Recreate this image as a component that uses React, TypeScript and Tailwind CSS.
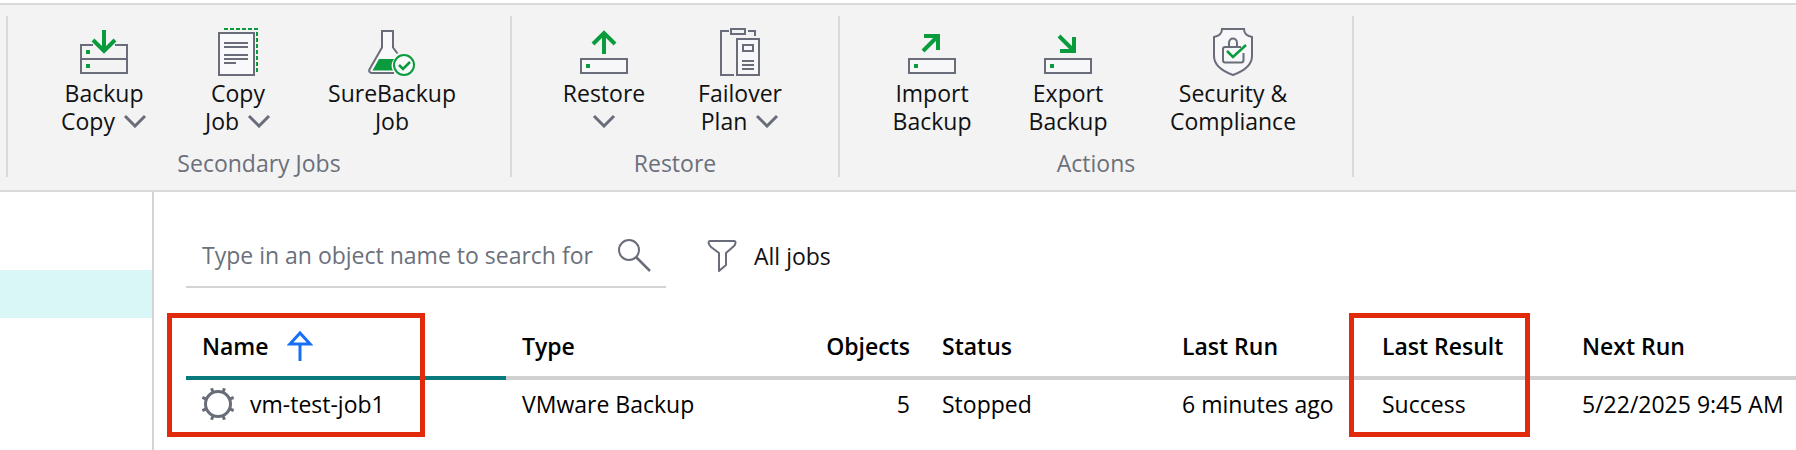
import type { ReactNode } from "react";

const GREEN = "#0a9b3c";

function Icon({ children }: { children: ReactNode }) {
  return (
    <svg width="48" height="48" viewBox="0 0 48 48" fill="none" stroke="#686d79" strokeWidth="2" aria-hidden="true">
      {children}
    </svg>
  );
}

// Single storage unit, shared by restore / import / export
function Drive() {
  return (
    <>
      <rect x="1" y="31" width="46" height="14" fill="#f7f7f9" />
      <rect x="6" y="36" width="4" height="4" fill={GREEN} stroke="none" />
    </>
  );
}

function BackupCopyIcon() {
  return (
    <Icon>
      <path d="M13 17H1v28h46V17H35M1 31h46" />
      <path d="M6 22h4v4H6zM6 36h4v4H6z" fill={GREEN} stroke="none" />
      <path d="M24 2v20M13 12l11 11 11-11" stroke={GREEN} strokeWidth="4" />
    </Icon>
  );
}

function CopyJobIcon() {
  return (
    <Icon>
      <rect x="5" y="5" width="35" height="42" fill="#f9f9fb" />
      <path d="M10 15h24M10 19h24M10 27h24M10 31h24M10 35h12" />
      <path d="M10 1h34M43 4v40" stroke={GREEN} strokeDasharray="4 2" />
    </Icon>
  );
}

function SureBackupIcon() {
  return (
    <Icon>
      <path d="M26 45H4c-2.500 0-3.500-2-2.300-4L14 19.500V3h11v16.500l4.500 6" fill="#f9f9fb" />
      <path d="M11 31h15c-3 4-3 8-1 11.500H4.500z" fill={GREEN} stroke="none" />
      <circle cx="36" cy="37" r="10" stroke={GREEN} fill="#f9f9fb" />
      <path d="M31 37l4 4 7-7" stroke={GREEN} strokeWidth="2.500" />
    </Icon>
  );
}

function RestoreIcon() {
  return (
    <Icon>
      <Drive />
      <path d="M24 26V6M13 16L24 5l11 11" stroke={GREEN} strokeWidth="4" />
    </Icon>
  );
}

function FailoverIcon() {
  return (
    <Icon>
      <path d="M13 3H5v44h13M32 3h7v5" />
      <rect x="15" y="1" width="14" height="5" />
      <rect x="21" y="11" width="22" height="36" fill="#f7f7f9" />
      <rect x="27" y="17" width="10" height="6" />
      <path d="M26 33h12M26 37h12M26 41h12" />
    </Icon>
  );
}

function ImportIcon() {
  return (
    <Icon>
      <Drive />
      <path d="M15 23L29 9M16 8h14v14" stroke={GREEN} strokeWidth="4" />
    </Icon>
  );
}

function ExportIcon() {
  return (
    <Icon>
      <Drive />
      <path d="M15 8l14 14M16 23h14V9" stroke={GREEN} strokeWidth="4" />
    </Icon>
  );
}

function SecurityIcon() {
  return (
    <Icon>
      <path d="M13 1h22c0 4 3 7 8 8v19c0 9-8 15-19 19C13 43 5 37 5 28V9c5-1 8-4 8-8z" fill="#f7f7f9" />
      <path d="M20 19v-4c0-6 8-6 8 0v4M32 19H16c-1.500 0-2 .5-2 2v11c0 1.500.5 2.500 2 2.500h16c1.500 0 2.500-1 2.500-2.500v-7" />
      <path d="M18 23l6 6 13-12" stroke={GREEN} strokeWidth="2.500" />
    </Icon>
  );
}

function Chevron() {
  return (
    <svg width="24" height="14" viewBox="0 0 24 14" fill="none" stroke="#686d79" strokeWidth="3" aria-hidden="true">
      <path d="M2 2l10 10L22 2" />
    </svg>
  );
}

interface ActionProps {
  icon: ReactNode;
  top: string;
  bottom?: string;
  menu?: boolean;
  className: string;
}

function RibbonAction({ icon, top, bottom, menu, className }: ActionProps) {
  return (
    <button type="button" className={`flex flex-col items-center gap-[3px] ${className}`}>
      {icon}
      <span className="flex flex-col items-center leading-7 whitespace-nowrap">
        <span>{top}</span>
        <span className="flex h-7 items-center gap-2">
          {bottom}
          {menu && <Chevron />}
        </span>
      </span>
    </button>
  );
}

function RibbonGroup({ label, className, children }: { label: string; className: string; children: ReactNode }) {
  return (
    <section aria-label={label} className={`flex flex-col border-r-2 border-[#d9d9d9] pt-3 ${className}`}>
      <div className="flex pl-6">{children}</div>
      <div className="mt-3.5 text-center leading-7 text-[#6b707b]">{label}</div>
    </section>
  );
}

function Ribbon() {
  return (
    <header className="flex border-y-2 border-[#d9d9d9] bg-[#f3f3f3] pt-[11px] pb-[13px]">
      <div className="w-2 border-r-2 border-[#d9d9d9]" />
      <RibbonGroup label="Secondary Jobs" className="w-[504px]">
        <RibbonAction icon={<BackupCopyIcon />} top="Backup" bottom="Copy" menu className="w-36" />
        <RibbonAction icon={<CopyJobIcon />} top="Copy" bottom="Job" menu className="w-[124px]" />
        <RibbonAction icon={<SureBackupIcon />} top="SureBackup" bottom="Job" className="w-[184px]" />
      </RibbonGroup>
      <RibbonGroup label="Restore" className="w-[328px]">
        <RibbonAction icon={<RestoreIcon />} top="Restore" menu className="w-[136px]" />
        <RibbonAction icon={<FailoverIcon />} top="Failover" bottom="Plan" menu className="w-[136px]" />
      </RibbonGroup>
      <RibbonGroup label="Actions" className="w-[514px]">
        <RibbonAction icon={<ImportIcon />} top="Import" bottom="Backup" className="w-[136px]" />
        <RibbonAction icon={<ExportIcon />} top="Export" bottom="Backup" className="w-[136px]" />
        <RibbonAction icon={<SecurityIcon />} top="Security &" bottom="Compliance" className="w-[194px]" />
      </RibbonGroup>
    </header>
  );
}

function SearchBar() {
  return (
    <div className="flex items-center gap-10 pl-8">
      <div className="flex h-16 w-[480px] items-center border-b-2 border-[#d4d4d4] pr-3.5 pl-4">
        <input
          type="text"
          aria-label="Search jobs"
          placeholder="Type in an object name to search for"
          className="h-10 min-w-0 flex-1 outline-none placeholder:text-[#6b707b]"
        />
        <svg width="36" height="36" viewBox="0 0 36 36" fill="none" stroke="#686d79" strokeWidth="2" aria-hidden="true">
          <circle cx="13" cy="13" r="10" />
          <path d="M20 20l14 14" strokeWidth="2.500" />
        </svg>
      </div>
      <button type="button" className="flex items-center gap-4">
        <svg width="32" height="34" viewBox="0 0 32 34" fill="none" stroke="#686d79" strokeWidth="2" strokeLinejoin="round" aria-hidden="true">
          <path d="M4 2h24c2 0 2 3 0 5l-8 7v12l-7 6V14L5 8C2 5 2 2 4 2z" />
        </svg>
        All jobs
      </button>
    </div>
  );
}

function SortIcon() {
  return (
    <svg width="26" height="32" viewBox="0 0 26 32" fill="none" stroke="#1670f5" strokeWidth="3" aria-hidden="true">
      <path d="M13 3L3 14h20zM13 14v17" />
    </svg>
  );
}

function GearIcon() {
  return (
    <svg width="32" height="32" viewBox="0 0 32 32" fill="none" stroke="#686d79" strokeWidth="3" aria-hidden="true">
      <circle cx="16" cy="16" r="12.500" />
      {[22.5, 67.5, 112.5, 157.5, 202.5, 247.5, 292.5, 337.5].map((a) => (
        <path key={a} d="M16 3.500V-1" transform={`rotate(${a} 16 16)`} />
      ))}
    </svg>
  );
}

function JobsTable() {
  const th = "border-b-4 border-[#d0d0d0] px-4 text-left font-semibold";
  return (
    <div className="relative mt-7 ml-8">
      <table className="w-full table-fixed border-separate border-spacing-0 whitespace-nowrap text-black">
        <thead>
          <tr className="h-16">
            <th className="w-80 border-b-4 border-[#08797c] px-4 text-left font-semibold">
              <button type="button" className="flex items-center gap-[18px]">
                Name
                <SortIcon />
              </button>
            </th>
            <th className={`w-60 ${th}`}>Type</th>
            <th className="w-[180px] border-b-4 border-[#d0d0d0] px-4 text-right font-semibold">Objects</th>
            <th className={`w-60 ${th}`}>Status</th>
            <th className={`w-[200px] ${th}`}>Last Run</th>
            <th className={`w-[200px] ${th}`}>Last Result</th>
            <th className={th}>Next Run</th>
          </tr>
        </thead>
        <tbody>
          <tr className="h-12">
            <td className="px-4">
              <span className="flex items-center gap-4">
                <GearIcon />
                vm-test-job1
              </span>
            </td>
            <td className="px-4">VMware Backup</td>
            <td className="px-4 text-right">5</td>
            <td className="px-4">Stopped</td>
            <td className="px-4">6 minutes ago</td>
            <td className="px-4">Success</td>
            <td className="px-4">5/22/2025 9:45 AM</td>
          </tr>
        </tbody>
      </table>
      {/* Callouts around the job name and its result */}
      <div className="pointer-events-none absolute -top-[3px] -left-[19px] h-[124px] w-[258px] border-5 border-[#e12a0c]" />
      <div className="pointer-events-none absolute -top-[3px] left-[1163px] h-[124px] w-[181px] border-5 border-[#e12a0c]" />
    </div>
  );
}

export default function App() {
  return (
    <div className="flex min-h-screen flex-col bg-white pt-[3px] font-['Open_Sans','Noto_Sans',sans-serif] text-[23px] text-[#111111]">
      <Ribbon />
      <div className="flex flex-1">
        <aside className="w-[154px] shrink-0 border-r-2 border-[#d4d4d4] pt-[78px]">
          <div className="h-12 bg-[#d9f7f6]" />
        </aside>
        <main className="min-w-0 flex-1 pt-8">
          <SearchBar />
          <JobsTable />
        </main>
      </div>
    </div>
  );
}
